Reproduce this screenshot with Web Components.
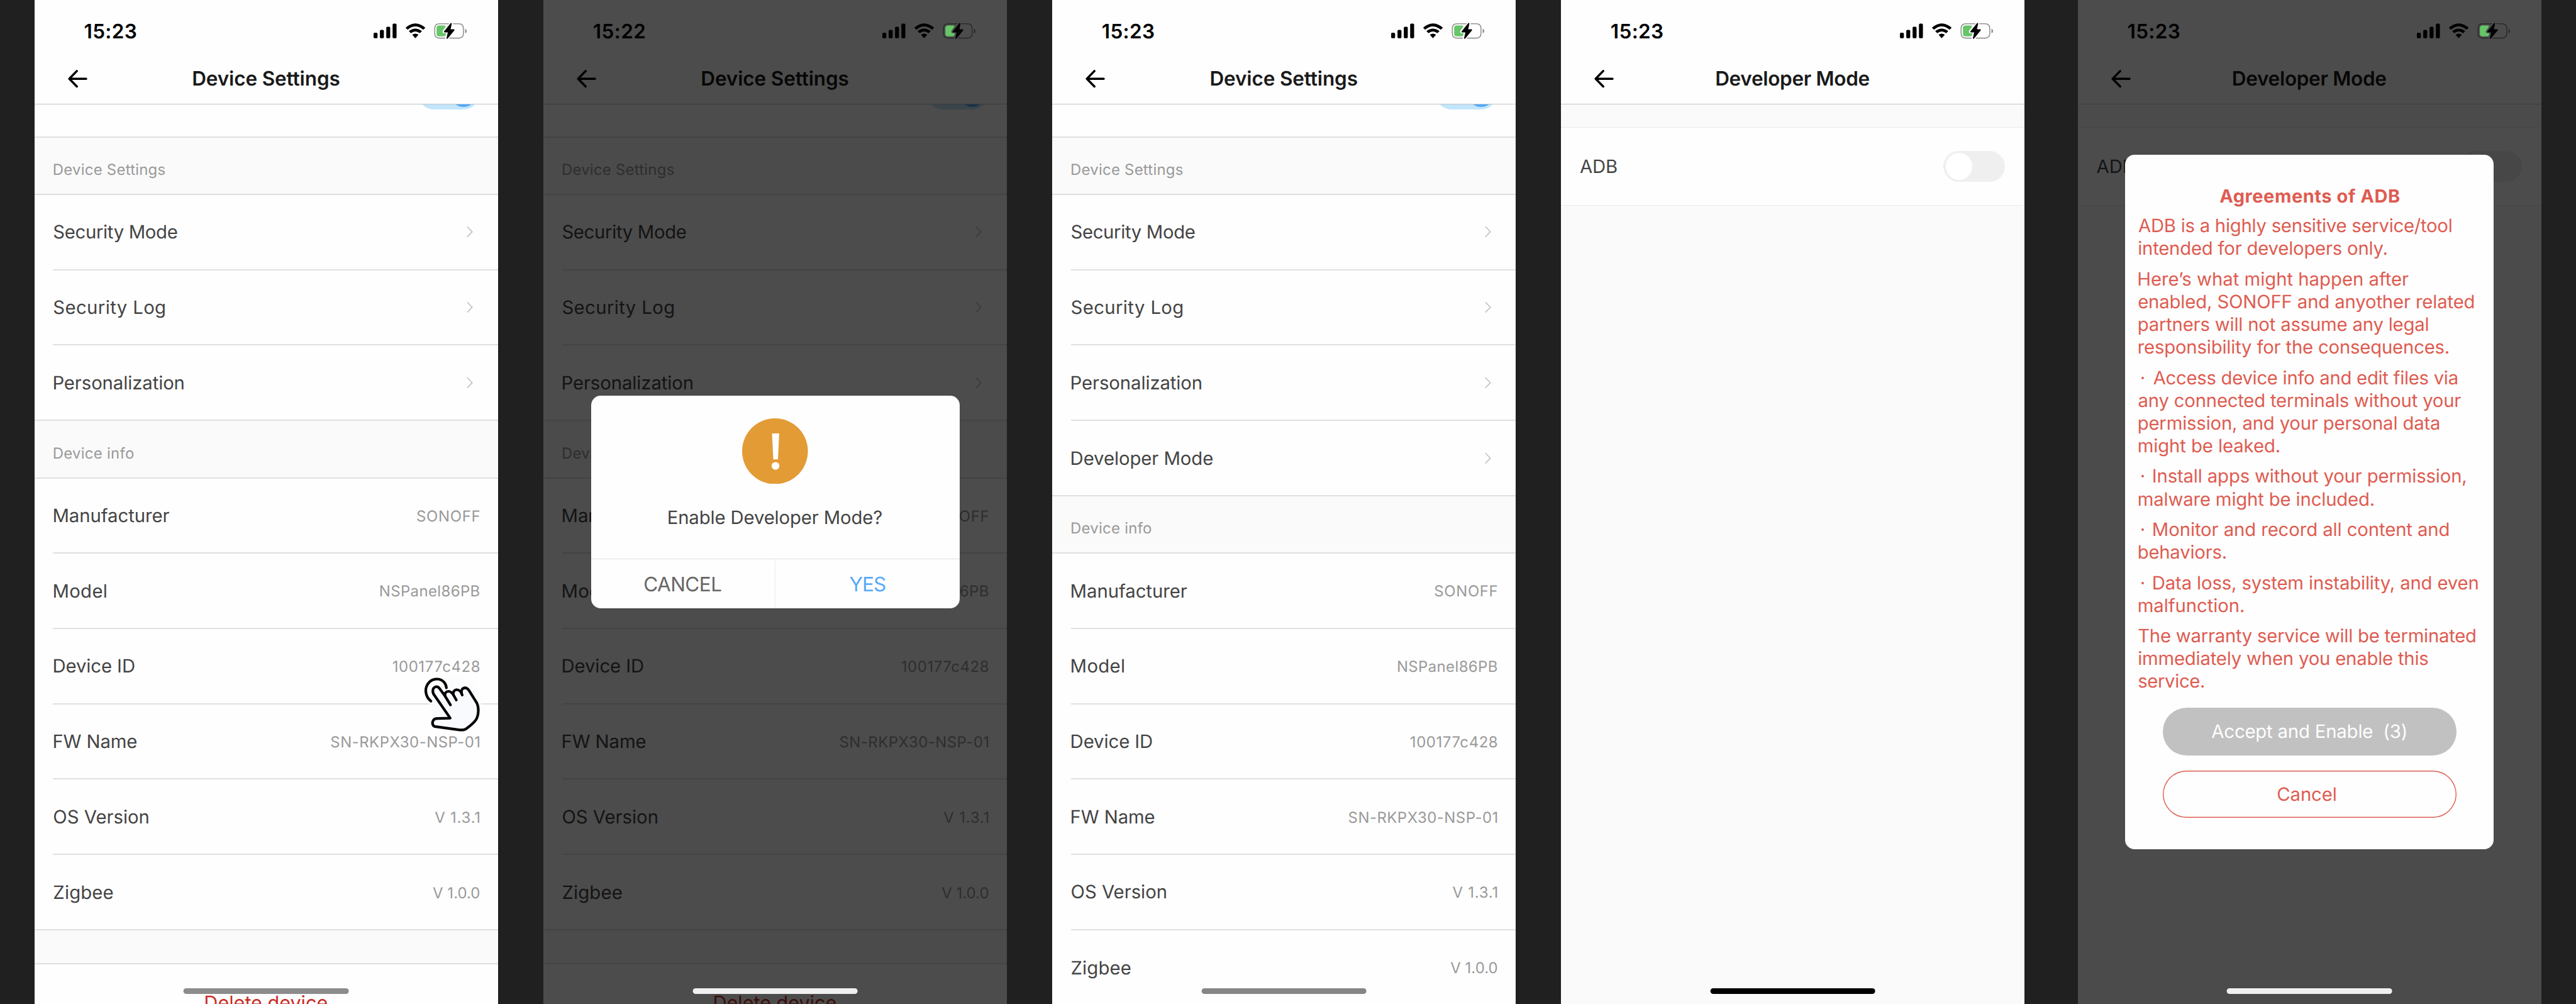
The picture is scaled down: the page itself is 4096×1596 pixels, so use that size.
<!DOCTYPE html>
<html lang="en">
<head>
<meta charset="utf-8">
<title>Developer Mode</title>
<style>
  /* 1rem = 100 design units on a 6500-unit wide board */
  html { font-size: calc(100vw / 65); }
  body { margin: 0; background: #202020; font-family: Inter, "Liberation Sans", sans-serif; text-rendering: geometricPrecision; overflow: hidden; }
  .board { display: flex; gap: 1.14rem; padding-left: .87rem; height: 25.32rem; overflow: hidden; }
  .board > :last-child { margin-left: .2rem; }
</style>
</head>
<body>
<main class="board">
  <phone-screen time="15:23" heading="Device Settings" heading-w="369" indicator="#8c8c8c">
    <settings-list></settings-list>
    <tap-hand slot="over"></tap-hand>
  </phone-screen>
  <phone-screen time="15:22" heading="Device Settings" heading-w="369" indicator="#f0f0f0" dim>
    <settings-list></settings-list>
    <confirm-dialog slot="over"></confirm-dialog>
  </phone-screen>
  <phone-screen time="15:23" heading="Device Settings" heading-w="369" indicator="#868686">
    <settings-list developer></settings-list>
  </phone-screen>
  <phone-screen time="15:23" heading="Developer Mode" heading-w="386" indicator="#000">
    <adb-page></adb-page>
  </phone-screen>
  <phone-screen time="15:23" heading="Developer Mode" heading-w="386" indicator="#f0f0f0" dim>
    <adb-page></adb-page>
    <agreement-dialog slot="over"></agreement-dialog>
  </phone-screen>
</main>
<script>
const define = (name, render) => customElements.define(name, class extends HTMLElement {
  connectedCallback() {
    if (this.shadowRoot) return;
    this.attachShadow({ mode: 'open' }).innerHTML = render(this);
  }
});
const t = (text, w) => `<fit-text w="${w}">${text}</fit-text>`;

define('status-bar', el => `
<style>
  :host { display: flex; box-sizing: border-box; height: 1.41rem; padding: .137rem .785rem 0 1.265rem; justify-content: space-between; align-items: center; font-size: .5rem; font-weight: 600; color: #000; position: relative; z-index: 2; }
  svg { display: block; width: 2.357rem; height: .414rem; }
</style>
${t(el.getAttribute('time'), 130)}
<svg viewBox="129 80 707 124">
  <rect x="129" y="156" width="30" height="42" rx="9"/><rect x="177" y="135" width="30" height="63" rx="9"/>
  <rect x="225" y="111" width="30" height="87" rx="9"/><rect x="273" y="87" width="30" height="111" rx="9"/>
  <path d="M371 118 Q445 54 521 118 L505 134 Q445 84 387 134 Z"/>
  <path d="M396 144 Q445 106 495 144 L479 160 Q445 134 412 160 Z"/>
  <path d="M422 171 Q445 155 469 171 L445 198 Z"/>
  <path d="M699 88 H628 Q592 88 592 124 V161 Q592 197 628 197 H672 M704 197 H773 Q809 197 809 161 V124 Q809 88 773 88 H730" fill="none" stroke="#000" stroke-opacity=".42" stroke-width="7.5"/>
  <path d="M822 126 Q834 130 834 143 Q834 156 822 160 Z" fill-opacity=".45"/>
  <path d="M622 101 H664 Q672 102 676 108 L652 142 Q647 155 660 160 H677 L674 176 Q670 184 660 184 H622 Q606 182 606 166 V119 Q606 103 622 101 Z" fill="#66c668"/>
  <path d="M713 83 Q720 80 721 88 L712 130 H737 Q744 132 740 139 L690 200 Q684 205 681 198 L691 154 H667 Q658 152 663 145 Z"/>
</svg>`);

define('nav-bar', el => `
<style>
  :host { display: grid; grid-template-columns: 1fr auto 1fr; align-items: center; box-sizing: border-box; height: 1.23rem; padding-bottom: .1rem; border-bottom: 1px solid #c5c5c7; font-size: .5rem; font-weight: 600; color: #1a1a1a; }
  svg { display: block; width: .49rem; height: .45rem; margin: .05rem 0 0 .847rem; }
</style>
<svg viewBox="0 0 49 45"><path d="M22.500 3 L3.500 22.500 L22.500 42 M4 22.500 H46" fill="none" stroke="#000" stroke-width="5.600" stroke-linecap="round" stroke-linejoin="round"/></svg>
${t(el.getAttribute('heading'), el.getAttribute('w'))}`);

define('phone-screen', el => `
<style>
  :host { display: flex; flex-direction: column; position: relative; flex: none; width: 11.7rem; height: 25.32rem; background: #fefefe; overflow: hidden; }
  .page { flex: 1; min-height: 0; overflow: hidden; display: flex; flex-direction: column; }
  .veil { position: absolute; inset: 0; z-index: 1; background: rgba(0,0,0,.7); }
  .over { position: absolute; inset: 0; z-index: 3; }
  .home { position: absolute; z-index: 4; left: 50%; transform: translateX(-50%); bottom: .24rem; width: 4.17rem; height: .15rem; border-radius: .075rem; background: ${el.getAttribute('indicator')}; }
</style>
<status-bar time="${el.getAttribute('time')}"></status-bar>
<nav-bar heading="${el.getAttribute('heading')}" w="${el.getAttribute('heading-w')}"></nav-bar>
<div class="page"><slot></slot></div>
${el.hasAttribute('dim') ? '<div class="veil"></div>' : ''}
<div class="over"><slot name="over"></slot></div>
<div class="home"></div>`);

define('toggle-switch', el => `
<style>
  :host { display: flex; flex: none; box-sizing: border-box; width: 1.55rem; height: .786rem; border-radius: .393rem; padding: .056rem; background: #efefef; }
  i { width: .674rem; height: .674rem; border-radius: 50%; background: #fff; }
  :host([on]) { background: #c2e5fb; justify-content: flex-end; width: 1.53rem; }
  :host([on]) i { background: #52a9f8; }
</style><i></i>`);

define('section-head', el => `
<style>
  :host { display: flex; align-items: center; box-sizing: border-box; flex: none; height: 1.48rem; padding: .19rem .49rem 0; background: #fafafa; border: solid #e0e0e0; border-width: 2px 0; font-size: .38rem; color: #999; }
</style>${t(el.getAttribute('label'), el.getAttribute('w'))}`);

define('setting-row', el => `
<style>
  :host { display: flex; flex: none; box-sizing: border-box; height: 1.9rem; padding-left: .47rem; }
  .in { flex: 1; display: flex; justify-content: space-between; align-items: center; box-sizing: border-box; padding: 0 .475rem 0 .02rem; border-bottom: 2px solid #e0e0e0; font-size: .465rem; color: #444; }
  :host([last]) { height: 1.87rem; }
  :host([last]) .in { border-bottom: 0; padding-top: .01rem; }
  .v { font-size: .38rem; color: #999; padding-top: .02rem; }
  svg { width: .18rem; height: .3rem; margin-right: .15rem; }
</style>
<div class="in">${t(el.getAttribute('label'), el.getAttribute('w'))}
${el.hasAttribute('value') ? `<span class="v">${t(el.getAttribute('value'), el.getAttribute('vw'))}</span>`
 : '<svg viewBox="0 0 18 30"><path d="M3 2 L15.500 15 L3 28" fill="none" stroke="#c4c4c6" stroke-width="2.800"/></svg>'}</div>`);

define('settings-list', el => {
  const nav = [['Security Mode', 311], ['Security Log', 280], ['Personalization', 327]];
  if (el.hasAttribute('developer')) nav.push(['Developer Mode', 356]);
  const info = [['Manufacturer', 291, 'SONOFF', 157], ['Model', 132, 'NSPanel86PB', 250], ['Device ID', 203, '100177c428', 218],
    ['FW Name', 209, 'SN-RKPX30-NSP-01', 374], ['OS Version', 238, 'V 1.3.1', 112], ['Zigbee', 149, 'V 1.0.0', 117]];
  const last = (a, i) => i === a.length - 1 ? 'last' : '';
  return `
<style>
  :host { display: flex; flex-direction: column; flex: none; }
  .cut { display: flex; flex: none; box-sizing: border-box; height: .8rem; overflow: hidden; justify-content: flex-end; align-items: flex-end; padding: 0 .485rem .685rem 0; }
  .gap { flex: none; box-sizing: border-box; height: .895rem; background: #fafafa; border: solid #e0e0e0; border-width: 2px 0; }
  .del { flex: none; display: flex; align-items: center; justify-content: center; height: 1.92rem; font-size: .485rem; color: #c92d25; }
</style>
<div class="cut"><toggle-switch on></toggle-switch></div>
<section-head label="Device Settings" w="280"></section-head>
${nav.map((r, i) => `<setting-row label="${r[0]}" w="${r[1]}" ${last(nav, i)}></setting-row>`).join('')}
<section-head label="Device info" w="201"></section-head>
${info.map((r, i) => `<setting-row label="${r[0]}" w="${r[1]}" value="${r[2]}" vw="${r[3]}" ${last(info, i)}></setting-row>`).join('')}
<div class="gap"></div>
<div class="del">${t('Delete device', 307)}</div>`;
});

define('adb-page', () => `
<style>
  :host { display: flex; flex-direction: column; flex: 1; background: #fafafa; }
  .row { display: flex; justify-content: space-between; align-items: center; box-sizing: border-box; height: 1.98rem; margin-top: .57rem; padding: 0 .5rem 0 .48rem; background: #fefefe; border: solid #ebebeb; border-width: 1px 0; font-size: .465rem; color: #444; }
</style>
<div class="row"><span>${t('ADB', 93)}</span><toggle-switch></toggle-switch></div>`);

/* Pointing hand with a tap ring, resting on the Device ID row */
define('tap-hand', () => `
<style>
  :host { position: absolute; left: 9.33rem; top: 16.5rem; width: 2.4rem; height: 2.4rem; }
  svg { display: block; width: 100%; height: 100%; }
</style>
<svg viewBox="0 0 720 720">
  <defs><radialGradient id="g"><stop offset=".8" stop-color="#fbfcfe"/><stop offset="1" stop-color="#fbfcfe" stop-opacity="0"/></radialGradient></defs>
  <ellipse cx="385" cy="378" rx="215" ry="228" fill="url(#g)"/>
  <g fill="none" stroke="#000" stroke-width="20" stroke-linecap="round" stroke-linejoin="round">
    <path d="M201 355 C160 323 151 267 176 227 C204 183 265 175 299 210 C312 224 317 239 318 254"/>
    <path fill="#f8fafd" d="M347 484 L220 300 C210 279 215 254 235 247 C249 243 261 251 268 262 L309 318 C302 295 316 280 335 281 C350 282 360 291 371 307 C365 283 382 267 400 269 C414 270 422 278 433 292 C429 270 440 255 458 254 C474 254 483 264 490 276 L548 368 C567 407 561 467 541 497 C526 519 490 548 468 564 C454 574 435 574 420 573 L230 547 C210 540 210 516 218 501 C226 488 238 486 250 486 Z"/>
    <path d="M309 318 L349 384 M371 307 L393 346 M428 286 L438 309"/>
  </g>
</svg>`);

define('confirm-dialog', () => `
<style>
  :host { position: absolute; left: 1.2rem; top: 9.98rem; width: 9.3rem; height: 5.36rem; display: flex; flex-direction: column; border-radius: .24rem; background: #fefefe; overflow: hidden; font-size: .465rem; color: #444; }
  .body { flex: 1; display: flex; flex-direction: column; align-items: center; padding-top: .57rem; }
  svg { display: block; flex: none; width: 1.66rem; height: 1.66rem; }
  .q { flex: 1; display: flex; align-items: center; padding-bottom: .19rem; }
  .act { display: flex; height: 1.225rem; border-top: 1px solid #e2e2e2; font-size: .5rem; }
  .act > span { flex: 1; display: flex; align-items: center; justify-content: center; color: #666; }
  .act > span + span { border-left: 1px solid #ececec; color: #58aaf7; }
</style>
<div class="body">
  <svg viewBox="0 0 166 166"><circle cx="83" cy="83" r="83" fill="#e39b35"/><path d="M75.500 38 H93.500 L90.500 103.500 H78.700 Z" fill="#fff"/><circle cx="84.300" cy="120" r="9.800" fill="#fff"/></svg>
  <div class="q">${t('Enable Developer Mode?', 538)}</div>
</div>
<div class="act"><span>${t('CANCEL', 194)}</span><span>${t('YES', 90)}</span></div>`);

define('agreement-dialog', () => {
  const text = [
    [['ADB is a highly sensitive service/tool', 789], ['intended for developers only.', 626]],
    [['Here’s what might happen after', 681], ['enabled, SONOFF and anyother related', 846], ['partners will not assume any legal', 730], ['responsibility for the consequences.', 782]],
    [['Access device info and edit files via', 766, 1], ['any connected terminals without your', 813], ['permission, and your personal data', 758], ['might be leaked.', 355]],
    [['Install apps without your permission,', 788, 1], ['malware might be included.', 593]],
    [['Monitor and record all content and', 745, 1], ['behaviors.', 220]],
    [['Data loss, system instability, and even', 818, 1], ['malfunction.', 265]],
    [['The warranty service will be terminated', 850], ['immediately when you enable this', 730], ['service.', 165]]
  ];
  return `
<style>
  :host { position: absolute; left: 1.2rem; top: 3.9rem; width: 9.3rem; height: 17.52rem; box-sizing: border-box; padding: .75rem .335rem 0; display: flex; flex-direction: column; border-radius: .24rem; background: #fefefe; font-size: .465rem; color: #de5c51; }
  h2 { margin: 0 0 .18rem; height: .5745rem; display: flex; align-items: center; justify-content: center; font-size: .46rem; font-weight: 700; }
  .copy { display: flex; flex-direction: column; gap: .193rem; }
  p { margin: 0; }
  .l { display: flex; align-items: center; height: .5745rem; }
  .l b { font-weight: 400; width: .305rem; margin-left: .07rem; flex: none; }
  .btn { align-self: center; display: flex; align-items: center; justify-content: center; flex: none; box-sizing: border-box; width: 7.415rem; height: 1.2rem; border-radius: .6rem; }
  .ok { margin-top: .381rem; background: #c1c1c1; color: #fefefe; padding-right: .04rem; }
  .no { margin-top: .385rem; box-shadow: inset 0 0 0 1.4px #de5c51; padding-right: .15rem; }
</style>
<h2>${t('Agreements of ADB', 453)}</h2>
<div class="copy">${text.map(p => `<p>${p.map(l => `<span class="l">${l[2] ? `<b>${t('·', 0)}</b>` : ''}${t(l[0], l[1])}</span>`).join(' ')}</p>`).join('')}</div>
<div class="btn ok">${t('Accept and Enable &nbsp;(3)', 490)}</div>
<div class="btn no">${t('Cancel', 146)}</div>`;
});

/* Tracks its text so that the ink spans w design units, and trims the side bearings */
const ctx = document.createElement('canvas').getContext('2d');
customElements.define('fit-text', class extends HTMLElement {
  connectedCallback() {
    if (this.shadowRoot) return;
    this.attachShadow({ mode: 'open' }).innerHTML = '<style>:host{display:block;white-space:pre;line-height:1.2;padding-top:.035rem}</style><slot></slot>';
    const s = this.textContent, cs = getComputedStyle(this), unit = innerWidth / 6500;
    /* Measured large and scaled down, so that the bearings are not rounded to whole pixels */
    const k = parseFloat(cs.fontSize) / 400;
    ctx.font = `${cs.fontWeight} 400px ${cs.fontFamily}`;
    const m = ctx.measureText(s), lsb = -m.actualBoundingBoxLeft * k, rsb = (m.width - m.actualBoundingBoxRight) * k;
    const w = Number(this.getAttribute('w')) * unit;
    const range = document.createRange();
    range.selectNodeContents(this);
    const ink = range.getBoundingClientRect().width - lsb - rsb;
    const ls = w && s.length > 1 ? (w - ink) / (s.length - 1) : 0;
    this.style.letterSpacing = ls + 'px';
    this.style.marginLeft = -lsb + 'px';
    this.style.marginRight = -(rsb + ls) + 'px';
  }
});
</script>
</body>
</html>
